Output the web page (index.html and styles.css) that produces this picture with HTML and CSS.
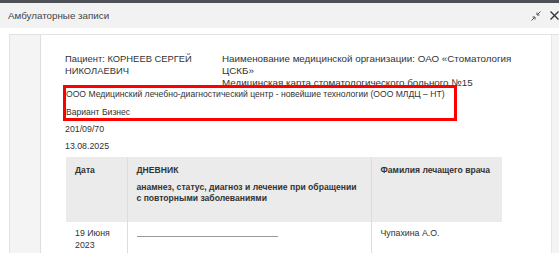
FILE: index.html
```html
<!DOCTYPE html>
<html lang="ru">
  <head>
    <meta charset="UTF-8" />
    <meta name="viewport" content="width=device-width, initial-scale=1.0" />
    <title>Амбулаторные записи</title>
    <link rel="stylesheet" href="styles.css">
  </head>
  <body>
    <div class="topbar"></div>

    <div class="modal-header">
      <div class="modal-title">Амбулаторные записи</div>
      <div class="modal-tools">
        <svg class="tool" width="10" height="10" viewBox="0 0 10 10">
          <path d="M0.5 9.5 L4 6 M4 6 L4 8.5 M4 6 L1.5 6 M9.5 0.5 L6 4 M6 4 L6 1.5 M6 4 L8.5 4" stroke="#555" stroke-width="1" fill="none" />
        </svg>
        <svg class="tool" width="9" height="9" viewBox="0 0 9 9">
          <path d="M0.5 0.5 L8.5 8.5 M8.5 0.5 L0.5 8.5" stroke="#333" stroke-width="1.3" fill="none" />
        </svg>
      </div>
    </div>

    <div class="viewer">
      <div class="page">
        <div class="info-head">
          <div class="patient">Пациент: КОРНЕЕВ СЕРГЕЙ НИКОЛАЕВИЧ</div>
          <div class="org">
            Наименование медицинской организации: ОАО «Стоматология ЦСКБ»<br />
            Медицинская карта стоматологического больного №15
          </div>
        </div>

        <!-- highlighted block -->
        <div class="highlight">
          <p>ООО Медицинский лечебно-диагностический центр - новейшие технологии (ООО МЛДЦ – НТ)</p>
          <p>Вариант Бизнес</p>
        </div>

        <p class="info-line first">201/09/70</p>
        <p class="info-line">13.08.2025</p>

        <table class="diary-table">
          <thead>
            <tr>
              <th class="col-date">Дата</th>
              <th class="col-diary">
                <div class="th-title">ДНЕВНИК</div>
                <div>анамнез, статус, диагноз и лечение при обращении<br />с повторными заболеваниями</div>
              </th>
              <th class="col-doctor">Фамилия лечащего врача</th>
            </tr>
          </thead>
          <tbody>
            <tr>
              <td>19 Июня 2023</td>
              <td><div class="blank-line"></div></td>
              <td>Чупахина А.О.</td>
            </tr>
          </tbody>
        </table>
      </div>
    </div>
  </body>
</html>
```

FILE: styles.css
```css
body {
  margin: 0;
  font-family: "Liberation Sans", Arial, sans-serif;
  color: #333;
  background-color: #fff;
  height: 253px;
  overflow: hidden;
}
.topbar {
  height: 3px;
  background-color: #4d5055;
}
.modal-header {
  display: flex;
  justify-content: space-between;
  align-items: center;
  height: 25px;
  padding: 0 0 0 8px;
  background-color: #f2f2f2;
}
.modal-title {
  font-size: 9.8px;
  color: #444;
}
.modal-tools {
  display: flex;
  align-items: center;
  gap: 9px;
}
.tool {
  display: block;
}
.viewer {
  display: flex;
  margin: 6px 0 0 9px;
  padding-left: 30px;
  border-top: 1px solid #e3e3e3;
  border-left: 1px solid #e3e3e3;
  background-color: #f4f4f4;
  min-height: 300px;
}
.page {
  width: 462px;
  padding: 18px 24px 0 24px;
  background-color: #fff;
  border-left: 1px solid #dedede;
  border-right: 1px solid #e6e6e6;
  font-size: 8.8px;
  line-height: 12px;
}
.info-head {
  display: grid;
  grid-template-columns: 157px 1fr;
}
.patient {
  font-size: 9.4px;
}
.org {
  font-size: 9.8px;
}
.highlight {
  position: relative;
  margin: -4px 0 0 -2px;
  width: 388px;
  border: 3px solid #f00;
  background-color: #fff;
  font-size: 8.6px;
}
.highlight p {
  margin: 0;
}
.highlight p + p {
  margin-top: 6px;
}
.info-line {
  margin: 0;
}
.info-line.first {
  margin-top: 2px;
}
.info-line + .info-line {
  margin-top: 5px;
}
.diary-table {
  margin: 5px 0 0 1px;
  width: 436px;
  table-layout: fixed;
  border-collapse: collapse;
}
.diary-table th,
.diary-table td {
  box-sizing: border-box;
  padding: 8px 9px 7px;
  text-align: left;
  vertical-align: top;
}
.diary-table th + th,
.diary-table td + td {
  border-left: 1px solid #ddd;
}
.diary-table th {
  height: 65px;
  background-color: #ebebeb;
  font-size: 8.6px;
  line-height: 11px;
  color: #333;
}
.diary-table td {
  padding-top: 5px;
  line-height: 12px;
}
.col-date {
  width: 61px;
}
.col-diary {
  width: 244px;
}
.col-doctor {
  width: 131px;
}
.th-title {
  margin-bottom: 6px;
}
.blank-line {
  width: 141px;
  margin-top: 9px;
  border-bottom: 1px solid #999;
}
```
